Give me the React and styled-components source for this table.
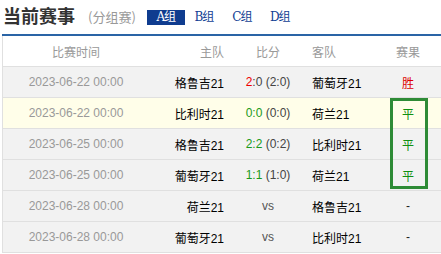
import React from 'react';
import styled, { createGlobalStyle } from 'styled-components';

const GlobalStyle = createGlobalStyle`
  html, body {
    margin: 0;
    padding: 0;
    background: #fff;
  }
  body {
    font-family: 'Liberation Sans', 'Noto Sans CJK SC', sans-serif;
  }
`;

const Wrapper = styled.div`
  width: 439px;
  padding-left: 2px;
  overflow: hidden;
`;

const TopBar = styled.div`
  display: flex;
  align-items: center;
  height: 34px;
  border-bottom: 2px solid #2a64a6;
  padding-left: 1px;
  box-sizing: border-box;
  height: 36px;
`;

const Title = styled.h2`
  margin: 0;
  font-size: 18px;
  font-weight: bold;
  color: #333;
  font-family: 'Noto Sans CJK SC', sans-serif;
  line-height: 18px;
  margin-top: -4px;
`;

const Sub = styled.span`
  margin-left: 13px;
  font-size: 13px;
  color: #999;
  font-family: 'Noto Sans CJK SC', sans-serif;
  margin-top: -2px;
`;

const Tabs = styled.div`
  display: flex;
  margin-left: 11px;
  margin-top: 1px;
`;

const Tab = styled.div`
  width: 38px;
  height: 15px;
  line-height: 15px;
  text-align: center;
  font-size: 12px;
  font-family: 'DejaVu Serif', 'Noto Sans CJK SC', serif;
  letter-spacing: -1px;
  color: ${({ active }) => (active ? '#fff' : '#123f94')};
  background: ${({ active }) => (active ? '#0f3c8f' : 'transparent')};
`;

const Table = styled.div`
  position: relative;
  border-left: 1px solid #e0e0e0;
`;

const Row = styled.div`
  display: grid;
  grid-template-columns: 146px 80px 78px 68px 66px;
  height: ${({ head }) => (head ? '30px' : '30px')};
  align-items: center;
  font-size: 12px;
  background: ${({ bg }) => bg || '#f2f2f2'};
  border-bottom: 1px solid #e0e0e0;
`;

const Cell = styled.div`
  text-align: ${({ align }) => align || 'center'};
  padding: ${({ align }) => (align === 'right' ? '0 5px 0 0' : align === 'left' ? '0 0 0 5px' : '0')};
  color: ${({ color }) => color || '#000'};
  white-space: nowrap;
`;

const Score = styled.span`
  color: ${({ color }) => color || '#444'};
`;

const Highlight = styled.div`
  position: absolute;
  left: 387px;
  top: 62px;
  width: 32px;
  height: 85px;
  border: 3px solid #2e8b36;
`;

const matches = [
  { time: '2023-06-22 00:00', home: '格鲁吉21', away: '葡萄牙21', score: ['2', ':0', ' (2:0)'], sc: '#e00', res: '胜', rc: '#d00', bg: '#f2f2f2' },
  { time: '2023-06-22 00:00', home: '比利时21', away: '荷兰21', score: ['0:0', '', ' (0:0)'], sc: '#1a9a1a', res: '平', rc: '#109010', bg: '#fffee9' },
  { time: '2023-06-25 00:00', home: '格鲁吉21', away: '比利时21', score: ['2:2', '', ' (0:2)'], sc: '#1a9a1a', res: '平', rc: '#109010' },
  { time: '2023-06-25 00:00', home: '葡萄牙21', away: '荷兰21', score: ['1:1', '', ' (1:0)'], sc: '#1a9a1a', res: '平', rc: '#109010' },
  { time: '2023-06-28 00:00', home: '荷兰21', away: '格鲁吉21', score: null, res: '-', rc: '#222' },
  { time: '2023-06-28 00:00', home: '葡萄牙21', away: '比利时21', score: null, res: '-', rc: '#222' },
];

export default function App() {
  return (
    <Wrapper>
      <GlobalStyle />
      <TopBar>
        <Title>当前赛事</Title>
        <Sub>(分组赛)</Sub>
        <Tabs>
          <Tab active>A组</Tab>
          <Tab>B组</Tab>
          <Tab>C组</Tab>
          <Tab>D组</Tab>
        </Tabs>
      </TopBar>
      <Table>
        <Row head bg="#fff">
          <Cell color="#999">比赛时间</Cell>
          <Cell color="#999" align="right">主队</Cell>
          <Cell color="#999">比分</Cell>
          <Cell color="#999" align="left">客队</Cell>
          <Cell color="#999">赛果</Cell>
        </Row>
        {matches.map((m, i) => (
          <Row key={i} bg={m.bg}>
            <Cell color="#999">{m.time}</Cell>
            <Cell align="right">{m.home}</Cell>
            <Cell color="#444">
              {m.score ? (
                <>
                  <Score color={m.sc}>{m.score[0]}</Score>
                  <Score>{m.score[1]}</Score>
                  <Score>{m.score[2]}</Score>
                </>
              ) : (
                <Score color="#555">vs</Score>
              )}
            </Cell>
            <Cell align="left">{m.away}</Cell>
            <Cell color={m.rc}>{m.res}</Cell>
          </Row>
        ))}
        <Highlight />
      </Table>
    </Wrapper>
  );
}
